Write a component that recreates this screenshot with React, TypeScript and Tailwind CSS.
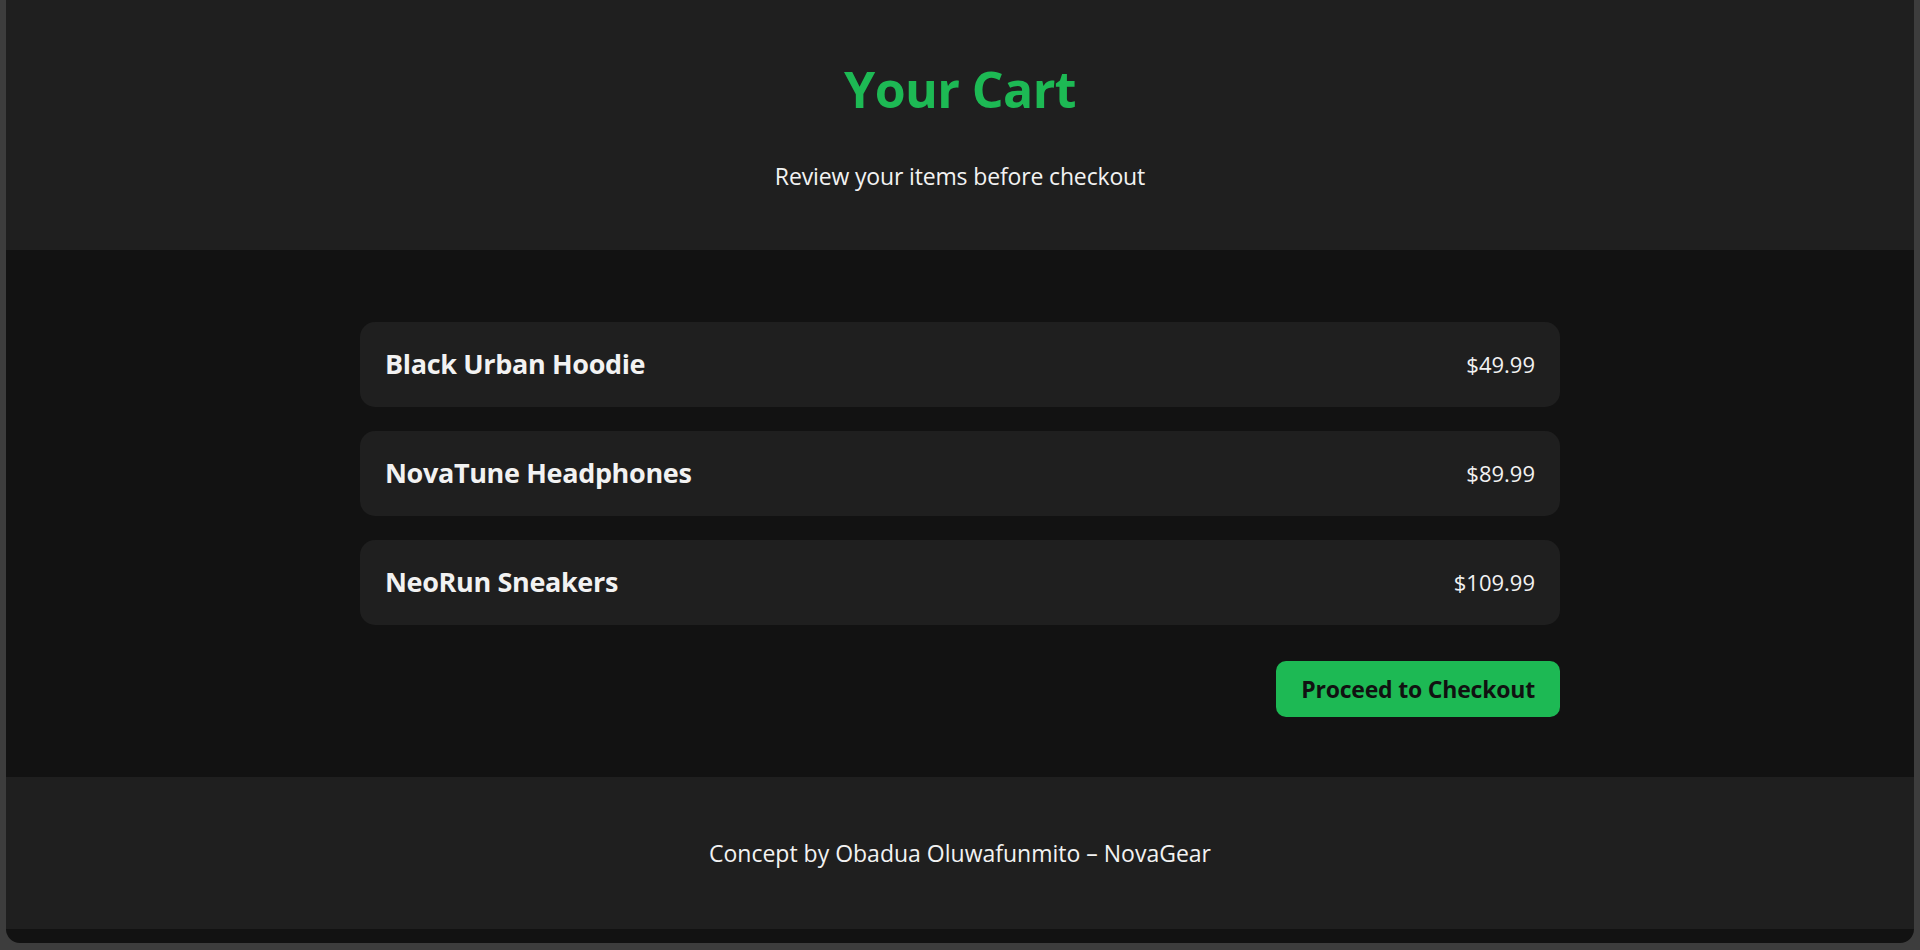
import React from "react";

const items = [
  { name: "Black Urban Hoodie", price: "$49.99" },
  { name: "NovaTune Headphones", price: "$89.99" },
  { name: "NeoRun Sneakers", price: "$109.99" },
];

export default function App() {
  return (
    <div
      className="h-[950px] w-full overflow-hidden bg-[#3d3d3d] px-[6px] pb-[7px]"
      style={{ fontFamily: '"Open Sans", "Noto Sans", sans-serif' }}
    >
      <div className="flex h-[943px] flex-col overflow-hidden rounded-b-[14px] bg-[#121212] text-[#f2f2f2]">
        <header className="flex h-[250px] shrink-0 flex-col items-center bg-[#1f1f1f] pt-[59px]">
          <h1 className="text-[50px] font-bold leading-[60px] tracking-[-0.6px] text-[#1db954]">Your Cart</h1>
          <p className="mt-[41px] text-[23px] leading-[32px] tracking-[-0.15px]">Review your items before checkout</p>
        </header>
        <main className="flex shrink-0 flex-col items-center pt-[72px] pb-[60px]">
          <div className="flex w-[1200px] flex-col">
            <div className="flex flex-col gap-[24px]">
              {items.map((it) => (
                <div
                  key={it.name}
                  className="flex h-[85px] items-center justify-between rounded-[15px] bg-[#1f1f1f] px-[25px]"
                >
                  <span className="text-[27px] font-bold tracking-[-0.35px]">{it.name}</span>
                  <span className="text-[22px]">{it.price}</span>
                </div>
              ))}
            </div>
            <button className="mt-[36px] flex h-[56px] items-center self-end rounded-[10px] bg-[#1db954] px-[25px] text-[23px] font-bold tracking-[-0.2px] text-[#111111]">
              Proceed to Checkout
            </button>
          </div>
        </main>
        <footer className="flex h-[152px] shrink-0 items-center justify-center bg-[#1f1f1f]">
          <p className="text-[23px] leading-[32px]">Concept by Obadua Oluwafunmito – NovaGear</p>
        </footer>
      </div>
    </div>
  );
}
